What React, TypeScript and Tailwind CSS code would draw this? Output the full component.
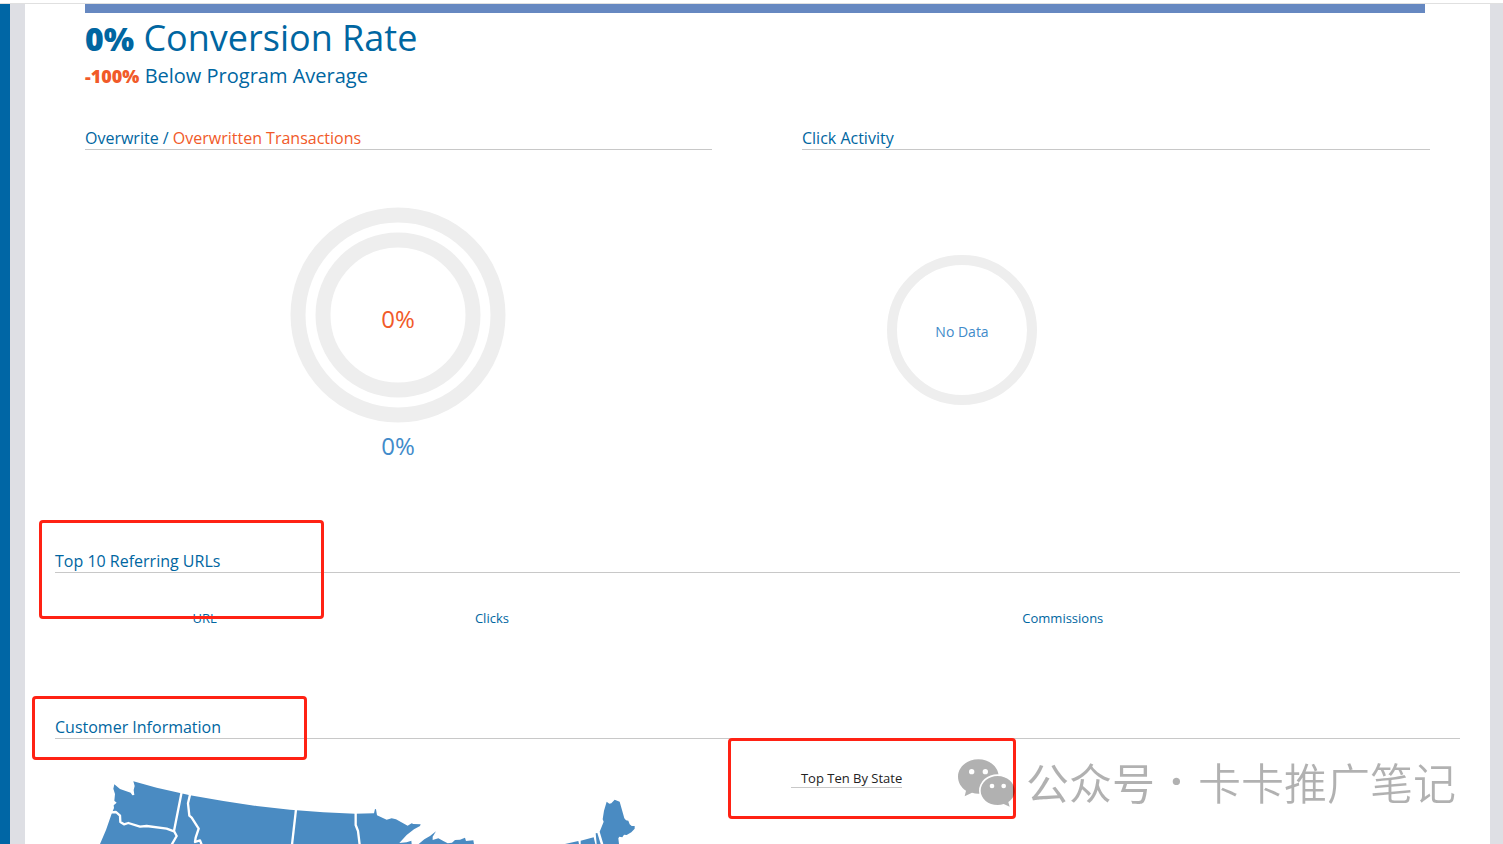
import type { ReactNode } from 'react';

interface SectionHeadingProps {
  children: ReactNode;
}

function SectionHeading({ children }: SectionHeadingProps) {
  return (
    <h2 className="border-b border-[#c8c8c8] pt-0.5 text-base leading-[22px] font-normal text-[#0066a1]">
      {children}
    </h2>
  );
}

function Highlight({ className }: { className: string }) {
  return <div className={`pointer-events-none absolute rounded-sm border-3 border-[#ff2214] ${className}`} />;
}

function OverwriteChart() {
  return (
    <svg viewBox="0 0 219 280" className="mx-auto mt-14 h-[280px] w-[219px]" role="img" aria-label="Overwrite transactions">
      <circle cx="109" cy="109" r="100" fill="none" stroke="#eeeeee" strokeWidth="15" />
      <circle cx="109" cy="109" r="75" fill="none" stroke="#eeeeee" strokeWidth="15" />
      <text x="109" y="122" textAnchor="middle" className="fill-[#f15a29] text-2xl">
        0%
      </text>
      <text x="109" y="249" textAnchor="middle" className="fill-[#428bca] text-2xl">
        0%
      </text>
    </svg>
  );
}

function ClickChart() {
  return (
    <div className="mt-26 w-80">
      <svg viewBox="0 0 152 152" className="mx-auto size-[152px]" role="img" aria-label="Click activity">
        <circle cx="76" cy="76" r="70" fill="none" stroke="#eeeeee" strokeWidth="10" />
        <text x="76" y="83" textAnchor="middle" className="fill-[#428bca] text-sm">
          No Data
        </text>
      </svg>
    </div>
  );
}

function CustomerMap() {
  return (
    <svg
      viewBox="-15 -9 1800 231"
      className="ml-[30px] h-[77px] w-[600px]"
      role="img"
      aria-label="Customers by state"
    >
      <g fill="#4a8bc2">
        <path d="M30 222 L48 180 L66 128 L72 114 L71 106 L80 98 L73 92 L75 72 L70 56 L73 43 L90 57 L122 68 L127 76 L133 75 L131 60 L134 48 L130 34 L200 53 L300 76 L400 93 L500 108 L600 119 L700 127 L795 131 L852 130 L855 117 L858 118 L861 136 L890 149 L905 145 L918 148 L953 167 L965 160 L970 162 L992 163 L990 168 L972 178 L950 195 L928 219 L950 217 L964 212 L965 222 Z" />
        <path d="M986 222 L1003 208 L1020 198 L1038 184 L1028 200 L1028 210 L1045 205 L1060 213 L1073 220 L1086 218 L1095 210 L1110 209 L1125 203 L1128 213 L1150 211 L1152 222 Z" />
        <path d="M1425 222 L1465 213 L1467 222 Z" />
        <path d="M1472 212 L1511 202 L1516 222 L1472 222 Z" />
        <path d="M1517 190 L1522 189 L1532 222 L1520 222 Z" />
        <path d="M1529 185 L1541 155 L1538 148 L1542 122 L1550 95 L1558 101 L1564 100 L1574 89 L1589 95 L1603 145 L1608 151 L1615 152 L1619 163 L1625 168 L1634 168 L1634 176 L1624 187 L1610 195 L1602 194 L1597 202 L1588 200 L1585 205 L1587 222 L1540 222 Z" />
      </g>
      <g fill="none" stroke="#ffffff" strokeWidth="7" strokeLinejoin="round">
        <path d="M275 66 L252 183 L260 198 L245 224" />
        <path d="M301 70 L294 100 L298 137 L305 143 L326 176 L317 203 L315 216 L330 211 L335 224" />
        <path d="M62 127 L78 126 L90 137 L91 156 L102 163 L115 159 L150 170 L170 168 L230 176 L252 184" />
        <path d="M618 118 L606 224" />
        <path d="M797 126 L797 165 L804 183 L809 224" />
      </g>
    </svg>
  );
}

function WeChatIcon() {
  return (
    <svg viewBox="0 0 174 150" className="mt-1.5 h-[50px] w-[58px]" aria-hidden="true">
      <mask id="bubble-gap">
        <rect width="174" height="150" fill="#ffffff" />
        <ellipse cx="119" cy="95" rx="56" ry="49" fill="#000000" />
        <circle cx="41" cy="38" r="8" fill="#000000" />
        <circle cx="82" cy="38" r="8" fill="#000000" />
      </mask>
      <mask id="small-eyes">
        <rect width="174" height="150" fill="#ffffff" />
        <circle cx="102" cy="81" r="7" fill="#000000" />
        <circle cx="137" cy="81" r="7" fill="#000000" />
      </mask>
      <path
        mask="url(#bubble-gap)"
        d="M61 1 C27 1 0 24 0 53 C0 70 9 85 24 95 L20 112 L42 101 Q51 104 61 104 C95 104 122 81 122 53 C122 24 95 1 61 1 Z"
      />
      <path
        mask="url(#small-eyes)"
        d="M119 51 C91 51 68 71 68 95 C68 119 91 138 119 138 Q129 138 137 135 L155 143 L151 129 C163 121 170 109 170 95 C170 71 147 51 119 51 Z"
      />
    </svg>
  );
}

function Watermark() {
  return (
    <div className="pointer-events-none absolute right-[34px] bottom-[33px] flex items-center text-[43px] leading-[60px] whitespace-nowrap text-black opacity-30">
      <WeChatIcon />
      <div className="ml-2.5 flex font-['Noto_Sans_CJK_SC',sans-serif]">
        <span>公众号</span>
        <span className="w-[43px] text-center font-['Open_Sans',sans-serif] font-bold">·</span>
        <span className="font-[350]">卡卡推广笔记</span>
      </div>
    </div>
  );
}

export default function App() {
  return (
    <div className="flex min-h-screen flex-col bg-white font-['Open_Sans',sans-serif] text-[#0066a1]">
      <div className="h-1 border-b border-[#e0e0e0]" />
      <div className="flex grow border-l-10 border-[#0066a5] bg-[#dedfe4] pr-[13px] pl-[15px]">
        <main className="relative grow bg-white px-[30px]">
          <div className="px-[30px]">
            <div className="mr-[5px] h-[9px] bg-[#6688c1]" />
            <h1 className="text-4xl leading-[50px] font-normal">
              <strong className="text-[32px] leading-none font-extrabold">0%</strong> Conversion Rate
            </h1>
            <p className="text-xl leading-[26px]">
              <strong className="text-lg leading-none font-extrabold text-[#f15a29]">-100%</strong> Below Program Average
            </p>

            <div className="mt-9 grid grid-cols-[627fr_628fr] gap-[90px]">
              <section>
                <SectionHeading>
                  Overwrite / <span className="text-[#f15a29]">Overwritten Transactions</span>
                </SectionHeading>
                <OverwriteChart />
              </section>
              <section>
                <SectionHeading>Click Activity</SectionHeading>
                <ClickChart />
              </section>
            </div>
          </div>

          <section className="relative mt-[62px]">
            <SectionHeading>Top 10 Referring URLs</SectionHeading>
            <table className="mt-[35px] w-full table-fixed text-[13px] leading-5">
              <thead>
                <tr>
                  <th className="w-[21.3%] p-0 font-normal">URL</th>
                  <th className="w-[19.6%] p-0 font-normal">Clicks</th>
                  <th className="p-0 pl-9 font-normal">Commissions</th>
                </tr>
              </thead>
            </table>
            <Highlight className="-top-7 -left-4 h-[99px] w-[285px]" />
          </section>

          <section className="relative mt-[86px]">
            <SectionHeading>Customer Information</SectionHeading>
            <div className="mt-7 grid grid-cols-[11fr_10fr]">
              <CustomerMap />
              <div className="relative">
                <h3 className="w-fit border-b border-[#c8c8c8] pt-0.5 pl-2.5 text-[13px] leading-[18px] text-[#222222]">
                  Top Ten By State
                </h3>
                <Highlight className="top-[-29px] left-[-63px] h-[81px] w-[288px]" />
              </div>
            </div>
            <Highlight className="top-[-18px] left-[-23px] h-16 w-[275px]" />
          </section>

          <Watermark />
        </main>
      </div>
    </div>
  );
}
